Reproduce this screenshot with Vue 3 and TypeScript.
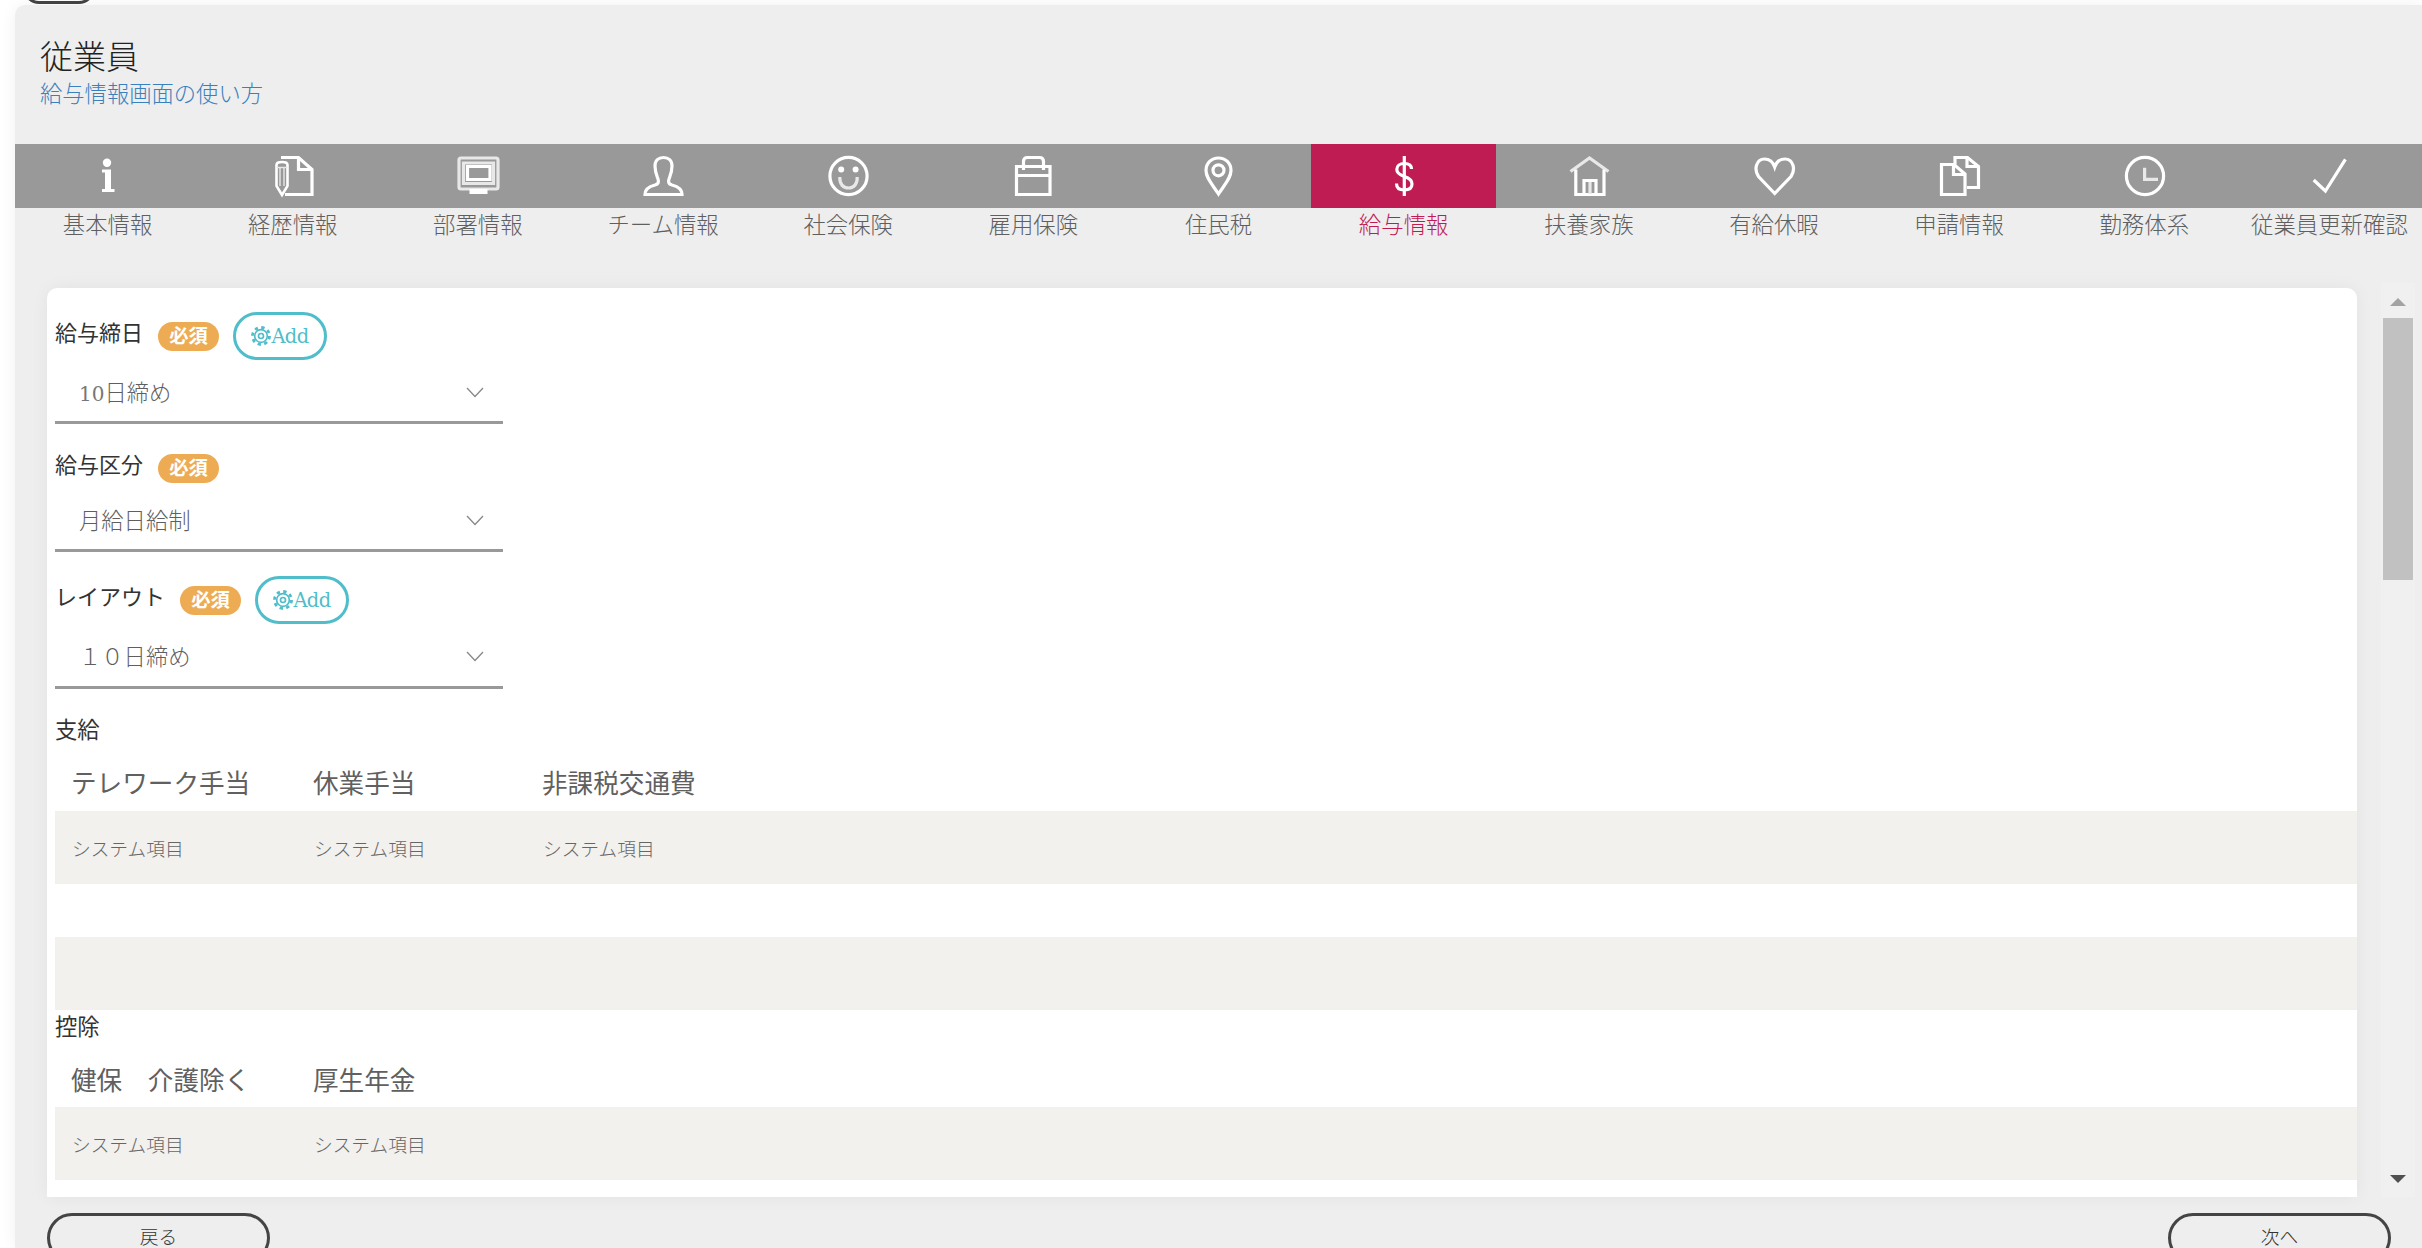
<script setup lang="ts">
interface Shape { d: string; k: 's' | 'l' | 'f' | 'p' | 't' }
interface Tab { label: string; shapes: Shape[]; active?: boolean }

const circle = (cx: number, cy: number, r: number): string =>
  `M${cx - r} ${cy}A${r} ${r} 0 1 1 ${cx + r} ${cy}A${r} ${r} 0 1 1 ${cx - r} ${cy}Z`

const tabs: Tab[] = [
  { label: '基本情報', shapes: [
    { k: 'f', d: circle(19, 6.8, 4.2) },
    { k: 'f', d: 'M14 13.5H23V33H26.5V36H14V33H17V16.5H14Z' },
  ] },
  { label: '経歴情報', shapes: [
    { k: 's', d: 'M8 1.5H25.5L39 13.5V38.5H12' },
    { k: 's', d: 'M25.5 1.5V13.5H39' },
    { k: 'p', d: 'M3.5 9C3.5 7 5 6 9 6C13 6 14.5 7 14.5 9V30L9 39L3.5 30Z' },
    { k: 't', d: 'M3.5 11.5H14.5M7 12V30M11 12V30' },
  ] },
  { label: '部署情報', shapes: [
    { k: 'l', d: 'M3 2H38Q40 2 40 4V31Q40 33 38 33H3Q1 33 1 31V4Q1 2 3 2Z' },
    { k: 'l', d: 'M5.5 7H35.5V27.5H5.5Z' },
    { k: 's', d: 'M9.5 10.5H32V23.5H9.5Z' },
    { k: 'f', d: 'M11.5 33H29.5V38H11.5Z' },
  ] },
  { label: 'チーム情報', shapes: [
    { k: 's', d: 'M2 38.5C2 33 6 30.5 12 29C15.5 28 16 26 15 23C13.5 19 12 16 12 10C12 4.5 15.5 1.5 20.5 1.5C25.5 1.5 29 4.5 29 10C29 16 27.5 19 26 23C25 26 25.5 28 29 29C35 30.5 39 33 39 38.5Z' },
  ] },
  { label: '社会保険', shapes: [
    { k: 's', d: circle(20.5, 20, 18.6) },
    { k: 'f', d: circle(13.2, 13.4, 3) },
    { k: 'f', d: circle(27.6, 13.4, 3) },
    { k: 'l', d: 'M11.8 21C11.5 28 15 32 20.5 32C26 32 29.5 28 29.2 21' },
  ] },
  { label: '雇用保険', shapes: [
    { k: 's', d: 'M3.5 10.5H37V38.5H3.5Z' },
    { k: 's', d: 'M3.5 19.5H37' },
    { k: 's', d: 'M10.5 14V5.5Q10.5 1.5 14.5 1.5H26.5Q30.5 1.5 30.5 5.5V14' },
  ] },
  { label: '住民税', shapes: [
    { k: 's', d: 'M20.5 38C14 28 8 22 8 14.5C8 7 13.5 2 20.5 2C27.5 2 33 7 33 14.5C33 22 27 28 20.5 38Z' },
    { k: 's', d: circle(20.5, 14.3, 5.5) },
  ] },
  { label: '給与情報', active: true, shapes: [
    { k: 's', d: 'M27.5 13C27.5 9 24.5 7.5 20.3 7.5C15.5 7.5 12.8 10 12.8 13.5C12.8 17.5 16 19 20.3 20.5C25 22 28 24 28 28C28 32 25 34 20.3 34C15.5 34 12.5 32 12.5 27.5' },
    { k: 's', d: 'M20.3 0V40' },
  ] },
  { label: '扶養家族', shapes: [
    { k: 'l', d: 'M1.5 15.5L20.5 2L39.5 15.5' },
    { k: 's', d: 'M6.8 13.5V38.5H35V13.5' },
    { k: 's', d: 'M15 38V24.5H27V38' },
    { k: 'l', d: 'M21 26V38' },
  ] },
  { label: '有給休暇', shapes: [
    { k: 's', d: 'M20.7 37.5L4.5 20.5C-0.5 13 2.5 3 10.5 3C15.5 3 19 6 20.7 11C22.4 6 26 3 31 3C39 3 42 13 37 20.5Z' },
  ] },
  { label: '申請情報', shapes: [
    { k: 's', d: 'M16 8.5V1.5H28.5L39.5 10.5V31.5H28' },
    { k: 's', d: 'M28 2V10.5H39' },
    { k: 's', d: 'M2.5 8.5H15L26 18V38.5H2.5Z' },
    { k: 's', d: 'M14.5 9V18.5H25.5' },
  ] },
  { label: '勤務体系', shapes: [
    { k: 's', d: circle(21, 20, 18.6) },
    { k: 'l', d: 'M20.6 11.7V23.3H34' },
  ] },
  { label: '従業員更新確認', shapes: [
    { k: 's', d: 'M4.7 24L16.4 35L36.4 3.3' },
  ] },
]

interface Field { label: string; num: string; value: string; add: boolean }
const fields: Field[] = [
  { label: '給与締日', num: '10', value: '日締め', add: true },
  { label: '給与区分', num: '', value: '月給日給制', add: false },
  { label: 'レイアウト', num: '', value: '１０日締め', add: true },
]

interface Group { title: string; heads: string[]; rows: number[] }
const groups: Group[] = [
  { title: '支給', heads: ['テレワーク手当', '休業手当', '非課税交通費'], rows: [1, 0, 2] },
  { title: '控除', heads: ['健保　介護除く', '厚生年金'], rows: [1] },
]
</script>

<template>
  <div class="page">
    <div class="top-strip"><button class="round top-btn"></button></div>
    <main class="panel">
      <header class="head">
        <h1>従業員</h1>
        <a class="help">給与情報画面の使い方</a>
      </header>
      <nav class="tabs">
        <div v-for="t in tabs" :key="t.label" class="tab" :class="{ active: t.active }">
          <div class="tab-icon">
            <svg width="40" height="40" viewBox="0 0 40 40">
              <path v-for="(s, i) in t.shapes" :key="i" :d="s.d" :class="s.k" />
            </svg>
          </div>
          <div class="tab-label">{{ t.label }}</div>
        </div>
      </nav>
      <div class="body">
        <section class="card">
          <div v-for="f in fields" :key="f.label" class="field">
            <div class="field-head">
              <label>{{ f.label }}</label>
              <span class="badge">必須</span>
              <button v-if="f.add" class="add">
                <svg width="20" height="20" viewBox="0 0 24 24" class="gear">
                  <circle cx="12" cy="12" r="10.2" class="teeth" />
                  <circle cx="12" cy="12" r="7.6" class="ring" />
                  <circle cx="12" cy="12" r="3" class="ring" />
                </svg>Add
              </button>
            </div>
            <div class="select">
              <span><span v-if="f.num" class="num">{{ f.num }}</span>{{ f.value }}</span>
              <svg width="18" height="11" viewBox="0 0 18 11" class="chev"><path d="M1 1L9 9.5L17 1" /></svg>
            </div>
          </div>
          <div v-for="g in groups" :key="g.title" class="group">
            <div class="group-title">{{ g.title }}</div>
            <table>
              <colgroup><col class="c1" /><col class="c2" /><col /></colgroup>
              <thead>
                <tr><th v-for="h in g.heads" :key="h">{{ h }}</th></tr>
              </thead>
              <tbody>
                <template v-for="(r, ri) in g.rows" :key="ri">
                  <tr v-if="r === 0" class="blank"><td colspan="3"></td></tr>
                  <tr v-else class="gray">
                    <template v-if="r === 1">
                      <td v-for="h in g.heads" :key="h">システム項目</td>
                      <td v-if="g.heads.length < 3"></td>
                    </template>
                    <td v-else colspan="3"></td>
                  </tr>
                </template>
              </tbody>
            </table>
          </div>
        </section>
        <aside class="scroll">
          <div class="arrow up"></div>
          <div class="thumb"></div>
          <div class="arrow down"></div>
        </aside>
      </div>
      <footer class="foot">
        <button class="round">戻る</button>
        <button class="round">次へ</button>
      </footer>
    </main>
  </div>
</template>

<style>
html, body { margin: 0; background: #fff; overflow: hidden; }
</style>

<style scoped>
.page {
  height: 1248px;
  overflow: hidden;
  font-family: "Liberation Serif", "Noto Sans CJK JP", serif;
  font-weight: 300;
  color: #333;
}
.top-strip { height: 5px; overflow: hidden; padding-left: 23px; }
.round {
  display: block;
  width: 223px;
  height: 50px;
  border: 3px solid #444;
  border-radius: 25px;
  background: transparent;
  color: #333;
  font: 300 18.7px/20px "Liberation Serif", "Noto Sans CJK JP", serif;
  padding: 0 0 1px;
}
.top-btn { width: 72px; height: 40px; margin-top: -36px; border-radius: 16px; }
.panel {
  margin-left: 15px;
  height: 1243px;
  background: #eee;
  border-radius: 10px 0 0 0;
  box-shadow: 0 0 16px rgba(0, 0, 0, 0.06);
  overflow: hidden;
}
.head { padding: 33px 0 0 25px; }
h1 { margin: 0; font-size: 33px; line-height: 40px; font-weight: 300; color: #222; }
.help { display: block; margin-top: 2px; font-size: 22.3px; line-height: 30px; color: #3a80bd; }
.tabs { display: grid; grid-template-columns: repeat(13, 1fr); margin-top: 34px; }
.tab { display: flex; flex-direction: column; align-items: center; }
.tab-icon {
  align-self: stretch;
  height: 64px;
  background: #999;
  display: flex;
  align-items: center;
  justify-content: center;
}
.tab.active .tab-icon { background: #be1c52; }
.tab-label { font-size: 22.4px; line-height: 30px; margin-top: 3px; color: #5f5f5f; white-space: nowrap; }
.tab.active .tab-label { color: #c01c53; }
svg { display: block; overflow: visible; }
.s { fill: none; stroke: #fff; stroke-width: 3.2; stroke-linejoin: miter; }
.l { fill: none; stroke: #e8e8e8; stroke-width: 3.2; }
.f { fill: #fff; }
.p { fill: #999; stroke: #fff; stroke-width: 2.6; }
.t { fill: none; stroke: #e8e8e8; stroke-width: 1.4; }
.body { display: flex; margin-top: 47px; padding-left: 32px; align-items: flex-start; }
.card {
  width: 2310px;
  height: 909px;
  box-sizing: border-box;
  padding-left: 8px;
  background: #fff;
  border-radius: 10px 10px 0 0;
  box-shadow: 0 0 18px rgba(0, 0, 0, 0.05);
  overflow: hidden;
}
.field { padding-top: 24px; }
.field-head { display: flex; align-items: center; min-height: 40px; }
label { font-size: 22px; line-height: 30px; font-weight: 400; color: #333; margin-top: -4px; }
.badge {
  width: 61px;
  height: 29px;
  margin-left: 15px;
  margin-top: 1px;
  border-radius: 15px;
  background: #edac54;
  color: #fff;
  font-size: 19.3px;
  font-weight: 700;
  line-height: 29px;
  text-align: center;
}
.add {
  display: flex;
  align-items: center;
  justify-content: center;
  box-sizing: border-box;
  width: 94px;
  height: 48px;
  margin-left: 14px;
  padding: 0;
  border: 3px solid #4fbdca;
  border-radius: 24px;
  background: #fff;
  color: #4fbdca;
  font: 19.5px "DejaVu Serif", serif;
  letter-spacing: -0.6px;
}
.gear { flex: none; }
.teeth { fill: none; stroke: #4fbdca; stroke-width: 3.4; stroke-dasharray: 4 4.01; }
.ring { fill: none; stroke: #4fbdca; stroke-width: 2; }
.select {
  width: 448px;
  height: 64px;
  box-sizing: border-box;
  border-bottom: 3px solid #999;
  padding: 0 19px 0 24px;
  display: flex;
  align-items: center;
  justify-content: space-between;
  font-size: 22.3px;
  color: #5f5f5f;
}
.num { font: 300 20px "DejaVu Serif", serif; color: #777; }
.field:nth-child(3) .select { height: 65px; }
.chev { margin-top: 3px; }
.chev path { fill: none; stroke: #888; stroke-width: 1.3; }
.group-title { font-size: 22.3px; line-height: 30px; font-weight: 400; color: #333; margin-top: 3.5px; }
.group:nth-of-type(4) .group-title { margin-top: 27px; }
table { width: 2302px; border-collapse: collapse; table-layout: fixed; }
.c1 { width: 242px; }
.c2 { width: 229px; }
th {
  height: 65px;
  box-sizing: border-box;
  padding: 0 0 9px 16px;
  vertical-align: bottom;
  text-align: left;
  font-size: 25.6px;
  line-height: 34px;
  font-weight: 400;
  color: #606060;
  white-space: nowrap;
}
.group:nth-of-type(5) th { height: 64px; padding-bottom: 7.5px; }
td { padding: 0 0 0 17px; font-size: 18.7px; color: #666; }
tr.gray td { height: 72px; background: #f2f1ee; border-top: 1px solid #eef0f5; border-bottom: 1px solid #eef0f5; box-sizing: border-box; }
tr.blank td { height: 53px; }
.scroll {
  width: 34px;
  height: 914px;
  margin: -5px 0 0 24px;
  background: #f0f0f0;
  display: flex;
  flex-direction: column;
  align-items: center;
}
.arrow { width: 0; height: 0; border-left: 8px solid transparent; border-right: 8px solid transparent; }
.arrow.up { margin-top: 15px; border-bottom: 8px solid #a3a3a3; }
.thumb { width: 30px; height: 262px; margin-top: 12px; background: #c1c1c1; }
.arrow.down { margin-top: auto; margin-bottom: 14px; border-top: 8px solid #505050; }
.foot { display: flex; justify-content: space-between; padding: 16px 31px 0 32px; }
</style>
